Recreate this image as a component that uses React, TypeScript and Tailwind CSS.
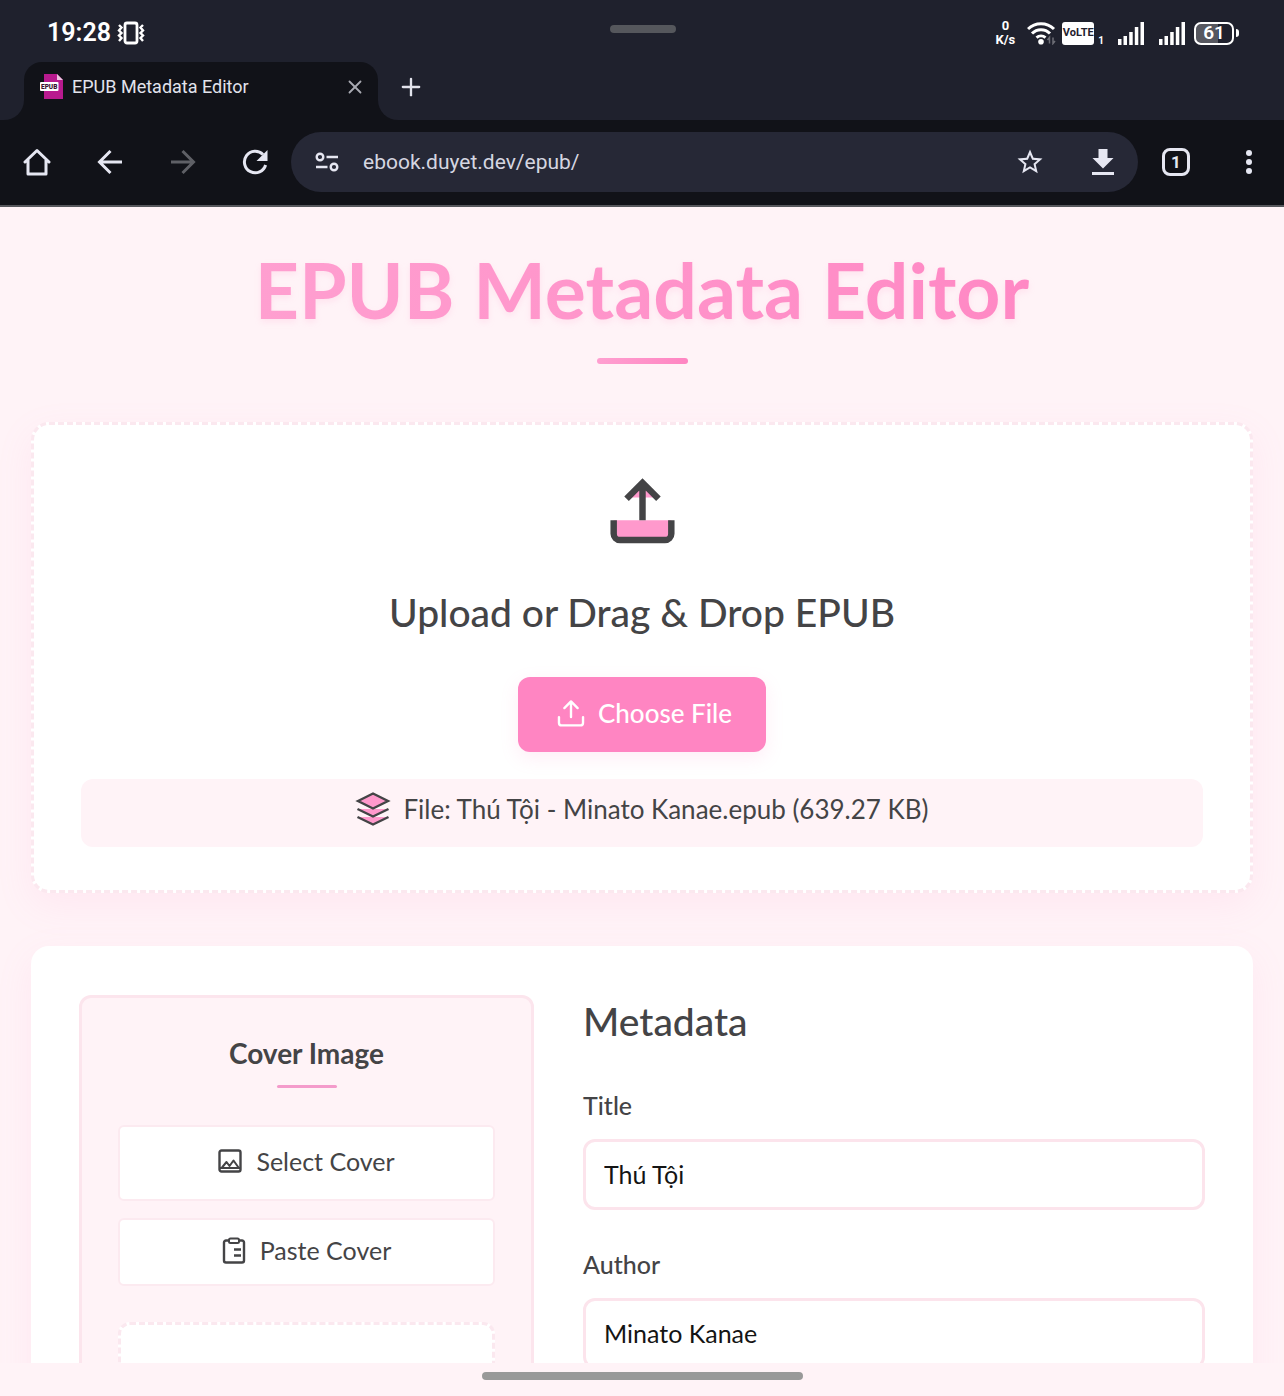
import { Plus, X } from "lucide-react";
import React, { useState } from "react";

const PAGE_FONT = "font-['Lato','Noto_Sans',sans-serif]";

function HomeIcon() {
  return (
    <svg width="28" height="28" viewBox="0 0 28 28" fill="none" stroke="currentColor" strokeWidth="3" strokeLinejoin="round" strokeLinecap="round">
      <path d="M2 14 14 2.500 26 14M5 12v14h18V12" />
    </svg>
  );
}

function ArrowIcon({ flip = false }: { flip?: boolean }) {
  return (
    <svg width="26" height="26" viewBox="0 0 26 26" fill="none" stroke="currentColor" strokeWidth="3">
      <path d={flip ? "M1 13h22M12.500 2 23.500 13 12.500 24" : "M25 13H3M13.500 2 2.500 13 13.500 24"} />
    </svg>
  );
}

function ReloadIcon() {
  return (
    <svg width="26" height="26" viewBox="0 0 26 26" fill="none" stroke="currentColor" strokeWidth="3">
      <path d="M21 5.500A10.800 10.800 0 1 0 23.600 16" />
      <path d="M25.500 1v11h-11z" fill="currentColor" stroke="none" />
    </svg>
  );
}

function TuneIcon() {
  return (
    <svg width="24" height="20" viewBox="0 0 24 20" fill="none" stroke="currentColor" strokeWidth="2.400">
      <circle cx="5" cy="5" r="3.300" />
      <path d="M11.500 5H23M1 15h11.500" />
      <circle cx="19" cy="15" r="3.300" />
    </svg>
  );
}

function StarIcon() {
  return (
    <svg width="30" height="30" viewBox="0 0 24 24" fill="currentColor">
      <path d="m22 9.240-7.190-.620L12 2 9.190 8.630 2 9.240l5.460 4.730L5.820 21 12 17.270 18.180 21l-1.630-7.030zM12 15.400l-3.760 2.270 1-4.280-3.320-2.880 4.380-.380L12 6.100l1.710 4.040 4.380.380-3.320 2.880 1 4.280z" />
    </svg>
  );
}

function DownloadIcon() {
  return (
    <svg width="24" height="28" viewBox="0 0 24 28" fill="currentColor">
      <path d="M7.500 1h9v9h6L12 20.500 1.500 10h6zM1 24h22v3H1z" />
    </svg>
  );
}

function VibrateIcon() {
  return (
    <svg width="28" height="24" viewBox="0 0 28 24" fill="none" stroke="currentColor">
      <rect x="8" y="2" width="12" height="20" rx="2" strokeWidth="2.800" />
      <path d="M2 4l2.500 2.500L2 9.500l2.500 2.500L2 14.500l2.500 2.500L2 20M26 4l-2.500 2.500L26 9.500l-2.500 2.500 2.500 2.500-2.500 2.500L26 20" strokeWidth="2.400" />
    </svg>
  );
}

function WifiIcon() {
  return (
    <svg width="29" height="24" viewBox="0 0 29 24" fill="none" stroke="currentColor" strokeWidth="3">
      <path d="M1 8a18.500 18.500 0 0 1 26 0M5 12.500a12.500 12.500 0 0 1 18 0M9.500 16.700a7 7 0 0 1 9 0" />
      <circle cx="14" cy="20.800" r="2.800" fill="currentColor" stroke="none" />
      <path d="M22.500 22.500v-6l-2 2.500M26 16.500v6l2-2.500" stroke="#6d6e76" strokeWidth="1.500" />
    </svg>
  );
}

function SignalIcon() {
  return (
    <svg width="27" height="24" viewBox="0 0 27 24" fill="currentColor">
      <path d="M0 18h3.500v6H0zM5.500 15H9v9H5.500zM11.200 11h3.500v13h-3.500zM16.800 6h3.500v18h-3.500zM22.500 1H26v23h-3.500z" />
    </svg>
  );
}

function EpubFileIcon() {
  return (
    <svg width="24" height="26" viewBox="0 0 24 26">
      <path d="M4 0h13l6 6v19H4z" fill="#b81a8e" />
      <path d="M17 0v6h6z" fill="#eec3e2" />
      <rect x="0" y="8" width="18.500" height="9" rx="1" fill="#fff" />
      <text x="9.200" y="14.800" textAnchor="middle" fontFamily="Roboto, sans-serif" fontSize="6.500" fontWeight="900" fill="#3a1230">
        EPUB
      </text>
    </svg>
  );
}

function UploadIcon({ size, filled = false }: { size: number; filled?: boolean }) {
  return (
    <svg
      width={size}
      height={size}
      viewBox="0 0 24 24"
      fill={filled ? "#ff99cc" : "none"}
      stroke="currentColor"
      strokeWidth={filled ? 1.7 : 1.5}
      strokeLinecap={filled ? "butt" : "round"}
      strokeLinejoin={filled ? "miter" : "round"}
    >
      <path d="M4.400 14.600v3.500a1.700 1.700 0 0 0 1.700 1.700h11.800a1.700 1.700 0 0 0 1.700-1.700v-3.500" />
      {filled && <path d="M8.200 8.600 12 4.700l3.800 3.900z" stroke="none" />}
      <path d="M7.800 8.900 12 4.700l4.200 4.200M12 4.700v9.900" fill="none" />
    </svg>
  );
}

function LayersIcon() {
  return (
    <svg width="36" height="36" viewBox="0 0 36 36" fill="#ff99cc" stroke="currentColor" strokeWidth="2.400">
      <path d="M2.500 26 18 33.500 33.500 26" />
      <path d="M2.500 18 18 25.500 33.500 18" />
      <path d="M3 10 18 2.500 33 10 18 17.500z" />
    </svg>
  );
}

function PictureIcon() {
  return (
    <svg width="24" height="24" viewBox="0 0 24 24" fill="none" stroke="currentColor" strokeWidth="2.400" strokeLinejoin="round">
      <rect x="1.500" y="1.500" width="21" height="21" rx="2" />
      <path d="M2 19h20M4 18.500l4.500-5.500 3 4 4-5.500 5 7" strokeWidth="2" />
    </svg>
  );
}

function ClipboardIcon() {
  return (
    <svg width="24" height="27" viewBox="0 0 24 27" fill="none" stroke="currentColor" strokeWidth="2.400">
      <path d="M7 3.500H4A2 2 0 0 0 2 5.500v18a2 2 0 0 0 2 2h16a2 2 0 0 0 2-2v-18a2 2 0 0 0-2-2h-3" />
      <rect x="7" y="1.500" width="10" height="4.500" rx="1.500" strokeWidth="2" />
      <path d="M12 12.500h7M12 18.500h7" />
    </svg>
  );
}

function StatusBar() {
  return (
    <div className="flex h-[62px] items-center justify-between bg-[#1f212d] pt-1 pr-[45px] pl-[47px] font-['Roboto',sans-serif] text-white">
      <div className="flex flex-1 items-center gap-1.5">
        <span className="text-[25px] leading-8 font-semibold">19:28</span>
        <VibrateIcon />
      </div>
      <div className="mb-2 h-2 w-[66px] rounded-full bg-[#55575c]" />
      <div className="flex flex-1 items-center justify-end">
        <div className="mr-3 text-center text-[13px] leading-[14px] font-bold">
          <div>0</div>
          <div>K/s</div>
        </div>
        <WifiIcon />
        <div className="ml-1.5 flex h-[23px] w-8 items-center justify-center rounded-[3px] bg-white text-[11px] leading-4 font-bold text-[#1f212d]">
          <span>VoLTE</span>
        </div>
        <span className="mr-3.5 ml-1 self-end text-[10px] leading-3 font-bold">1</span>
        <SignalIcon />
        <div className="w-3.5" />
        <SignalIcon />
        <div className="ml-2 flex items-center gap-0.5">
          <div className="flex h-[23px] w-10 items-center justify-center rounded-[7px] border-2 border-white bg-linear-to-r from-[#56575f] from-60% to-[#1f212d] to-60% text-[19px] leading-5 font-semibold">
            61
          </div>
          <div className="h-2 w-[3px] rounded-r-full bg-white" />
        </div>
      </div>
    </div>
  );
}

function TabStrip() {
  return (
    <div className="flex h-[58px] bg-[#111218] font-['Roboto',sans-serif]">
      <div className="w-6 rounded-br-[20px] bg-[#1f212d]" />
      <div className="bg-[#1f212d]">
        <div className="flex h-full w-[354px] items-center rounded-t-[18px] bg-[#111218] pr-3 pb-2 pl-4">
          <EpubFileIcon />
          <span className="ml-2 flex-1 text-[18px] leading-6 text-[#e2e3ec]">EPUB Metadata Editor</span>
          <button type="button" aria-label="Close tab" className="text-[#a9aab2]">
            <X size={22} strokeWidth={2} />
          </button>
        </div>
      </div>
      <div className="flex flex-1 items-center rounded-bl-[20px] bg-[#1f212d] pb-2 pl-[19px]">
        <button type="button" aria-label="New tab" className="text-[#e2e3ec]">
          <Plus size={28} strokeWidth={2} />
        </button>
      </div>
    </div>
  );
}

function Toolbar() {
  const [url, setUrl] = useState("ebook.duyet.dev/epub/");

  return (
    <div className="flex h-[87px] items-center border-b-2 border-[#56575c] bg-[#111218] pb-px font-['Roboto',sans-serif] text-[#e6e7f2]">
      <div className="flex w-[291px] justify-around">
        <button type="button" aria-label="Home"><HomeIcon /></button>
        <button type="button" aria-label="Back"><ArrowIcon /></button>
        <button type="button" aria-label="Forward" className="text-[#5f6066]"><ArrowIcon flip /></button>
        <button type="button" aria-label="Reload"><ReloadIcon /></button>
      </div>
      <div className="flex h-[60px] flex-1 items-center rounded-full bg-[#262836] pl-6">
        <TuneIcon />
        <input
          aria-label="Address"
          value={url}
          onChange={(e) => setUrl(e.target.value)}
          className="ml-6 min-w-0 flex-1 bg-transparent text-[21px] leading-8 text-[#d5d6e1] outline-none"
        />
        <div className="flex w-[146px] items-center justify-around">
          <button type="button" aria-label="Bookmark"><StarIcon /></button>
          <button type="button" aria-label="Downloads"><DownloadIcon /></button>
        </div>
      </div>
      <div className="flex w-[146px] items-center justify-around">
        <button type="button" aria-label="Tabs" className="flex size-7 items-center justify-center rounded-lg border-3 border-current text-[17px] leading-5 font-bold">
          1
        </button>
        <button type="button" aria-label="Menu" className="flex flex-col gap-[3px] px-2">
          <span className="size-1.5 rounded-full bg-current" />
          <span className="size-1.5 rounded-full bg-current" />
          <span className="size-1.5 rounded-full bg-current" />
        </button>
      </div>
    </div>
  );
}

function UploadCard() {
  return (
    <section className="mt-[58px] flex flex-col items-center rounded-[18px] border-3 border-dashed border-[#fbe8ef] bg-white px-[47px] pt-10 pb-[43px] shadow-[0_12px_36px_rgba(255,133,194,0.1)]">
      <UploadIcon size={91} filled />
      <h2 className="mt-8 text-[39px] leading-[48px] font-medium">Upload or Drag &amp; Drop EPUB</h2>
      <button
        type="button"
        className="mt-[41px] flex h-[75px] items-center gap-2 rounded-xl bg-[#ff85c2] px-[34px] pb-1 text-[26px] leading-9 font-medium text-white shadow-[0_6px_18px_rgba(255,133,194,0.15)]"
      >
        <UploadIcon size={38} />
        Choose File
      </button>
      <div className="mt-[27px] flex h-[68px] w-full items-center justify-center gap-3 rounded-xl bg-[#fff3f7] pb-2 text-[26px] leading-9">
        <LayersIcon />
        <span>File: Thú Tội - Minato Kanae.epub (639.27 KB)</span>
      </div>
    </section>
  );
}

function CoverPanel() {
  return (
    <div className="flex flex-col items-center rounded-xl border-3 border-[#fce5ed] bg-[#fff3f7] px-9 pt-[37px]">
      <h3 className="text-[28px] leading-9 font-bold">Cover Image</h3>
      <div className="mt-3.5 h-[3px] w-[60px] rounded-full bg-[#f49bcb]" />
      <button type="button" className="mt-[37px] flex h-[76px] w-full items-center justify-center gap-3.5 rounded-md border-2 border-[#fceaf0] bg-white pb-1 text-[25px] leading-9">
        <PictureIcon />
        Select Cover
      </button>
      <button type="button" className="mt-[17px] flex h-[68px] w-full items-center justify-center gap-3.5 rounded-md border-2 border-[#fceaf0] bg-white pb-1 text-[25px] leading-9">
        <ClipboardIcon />
        Paste Cover
      </button>
      <div className="mt-9 h-[300px] w-full rounded-xl border-3 border-dashed border-[#fbe8ef] bg-white" />
    </div>
  );
}

interface FieldProps {
  id: string;
  label: string;
  initial: string;
}

function Field({ id, label, initial }: FieldProps) {
  const [value, setValue] = useState(initial);

  return (
    <div className="flex flex-col gap-4">
      <label htmlFor={id} className="text-[25px] leading-9 font-medium">{label}</label>
      <input
        id={id}
        value={value}
        onChange={(e) => setValue(e.target.value)}
        className="h-[71px] w-full rounded-xl border-3 border-[#fce4ec] bg-white px-[18px] pb-0.5 text-[25px] leading-9 text-[#141414] outline-none"
      />
    </div>
  );
}

export default function App() {
  return (
    <div className="flex h-screen flex-col overflow-hidden bg-[#fff3f7]">
      <header>
        <StatusBar />
        <TabStrip />
        <Toolbar />
      </header>

      <main className={`min-h-0 flex-1 overflow-hidden px-[31px] pt-9 text-[#444446] ${PAGE_FONT}`}>
        <div className="flex flex-col items-center">
          <h1 className="bg-linear-to-r from-[#ff9fd0] to-[#ff88c4] bg-clip-text text-[77px] leading-[92px] font-bold text-transparent drop-shadow-[0_3px_3px_rgba(255,133,194,0.15)]">
            EPUB Metadata Editor
          </h1>
          <div className="mt-[23px] h-1.5 w-[91px] rounded-full bg-linear-to-r from-[#ff9fd0] to-[#ff85c2]" />
        </div>

        <UploadCard />

        <section className="mt-[53px] grid grid-cols-[455px_1fr] gap-[49px] rounded-[18px] bg-white px-12 pt-[49px] pb-12 shadow-[0_12px_36px_rgba(255,133,194,0.1)]">
          <CoverPanel />
          <form className="flex flex-col gap-9 pt-0.5">
            <h2 className="mb-1.5 text-[39px] leading-[48px] font-medium">Metadata</h2>
            <Field id="title" label="Title" initial="Thú Tội" />
            <Field id="author" label="Author" initial="Minato Kanae" />
          </form>
        </section>
      </main>

      {/* gesture bar */}
      <footer className="flex h-[33px] shrink-0 justify-center bg-[#fff3f7] pt-[9px]">
        <div className="h-2 w-1/4 rounded-full bg-[#999]" />
      </footer>
    </div>
  );
}
